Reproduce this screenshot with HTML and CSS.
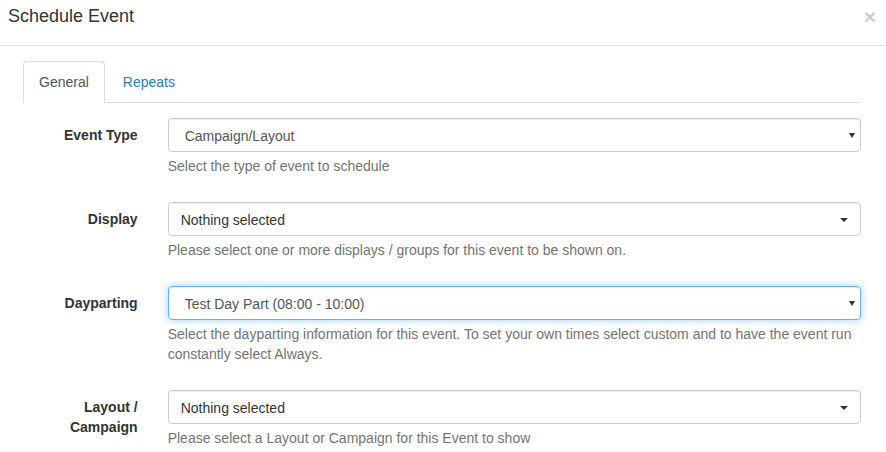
FILE: index.html
```html
<!DOCTYPE html>
<html lang="en">
<head>
<meta charset="UTF-8">
<title>Schedule Event</title>
<link rel="stylesheet" href="styles.css">
</head>
<body>
<div class="modal">
  <div class="modal-header">
    <h4 class="modal-title">Schedule Event</h4>
    <button class="close" type="button">&times;</button>
  </div>
  <div class="modal-body">
    <ul class="nav-tabs">
      <li class="active"><a href="#">General</a></li>
      <li><a href="#">Repeats</a></li>
    </ul>
    <div class="tab-pane">
      <div class="form-group">
        <label class="control-label">Event Type</label>
        <div class="field">
          <div class="form-control native"><span>Campaign/Layout</span><i class="arrow"></i></div>
          <p class="help-block">Select the type of event to schedule</p>
        </div>
      </div>
      <div class="form-group">
        <label class="control-label">Display</label>
        <div class="field">
          <div class="form-control picker"><span>Nothing selected</span><i class="caret"></i></div>
          <p class="help-block">Please select one or more displays / groups for this event to be shown on.</p>
        </div>
      </div>
      <div class="form-group">
        <label class="control-label">Dayparting</label>
        <div class="field">
          <div class="form-control native focus"><span>Test Day Part (08:00 - 10:00)</span><i class="arrow"></i></div>
          <p class="help-block">Select the dayparting information for this event. To set your own times select custom and to have the event run constantly select Always.</p>
        </div>
      </div>
      <div class="form-group">
        <label class="control-label">Layout /<br>Campaign</label>
        <div class="field">
          <div class="form-control picker"><span>Nothing selected</span><i class="caret"></i></div>
          <p class="help-block">Please select a Layout or Campaign for this Event to show</p>
        </div>
      </div>
    </div>
  </div>
</div>
</body>
</html>
```

FILE: styles.css
```css
body {
  margin: 0;
  background: #fff;
  color: #333;
  font-family: "Liberation Sans", Arial, sans-serif;
  font-size: 14px;
  line-height: 1.42857;
}
.modal { overflow: hidden; }
.modal-header {
  display: flex;
  align-items: flex-start;
  padding: 4px 10px 15px 8px;
  border-bottom: 1px solid #e5e5e5;
}
.modal-title { margin: 0; flex: 1; font-size: 18px; font-weight: 400; line-height: 1.42857; }
.close {
  background: none; border: 0; padding: 0; cursor: pointer;
  font-family: "Liberation Sans", Arial, sans-serif;
  font-size: 21px; font-weight: 700; line-height: 1;
  color: #000; opacity: .2; text-shadow: 0 1px 0 #fff;
  margin-top: 2px;
}
.modal-body { padding: 15px 25px 15px 23px; }
.nav-tabs {
  list-style: none; margin: 0; padding: 0;
  display: flex;
  border-bottom: 1px solid #ddd;
}
.nav-tabs li { margin-right: 2px; margin-bottom: -1px; }
.nav-tabs a {
  display: block; padding: 10px 15px; line-height: 20px;
  color: #337ab7; text-decoration: none;
  border: 1px solid transparent; border-radius: 4px 4px 0 0;
}
.nav-tabs .active a { color: #555; background: #fff; border-color: #ddd #ddd transparent; }
.tab-pane { padding-top: 15px; margin: 0 -15px; }
.form-group { display: flex; margin-bottom: 15px; }
.control-label {
  flex: 0 0 16.6667%; box-sizing: border-box;
  padding: 7px 15px 0; text-align: right; font-weight: 700; line-height: 20px;
}
.field { flex: 1; padding: 0 15px; min-width: 0; }
.form-control {
  box-sizing: border-box; height: 34px;
  display: flex; align-items: center;
  padding: 7px 12px 5px;
  border: 1px solid #ccc; border-radius: 4px;
  box-shadow: inset 0 1px 1px rgba(0,0,0,.075);
  color: #555;
}
.form-control span { flex: 1; white-space: nowrap; line-height: 20px; }
.native span { padding-left: 4px; }
.picker { color: #333; }
.form-control.focus {
  border-color: #66afe9;
  box-shadow: inset 0 1px 1px rgba(0,0,0,.075), 0 0 8px rgba(102,175,233,.6);
}
.arrow {
  width: 0; height: 0; margin-right: -7px;
  border-top: 5px solid #333;
  border-left: 3.5px solid transparent;
  border-right: 3.5px solid transparent;
}
.caret {
  width: 0; height: 0;
  border-top: 4px solid #333;
  border-left: 4px solid transparent;
  border-right: 4px solid transparent;
}
.help-block { margin: 5px 0 10px; color: #737373; }
```
